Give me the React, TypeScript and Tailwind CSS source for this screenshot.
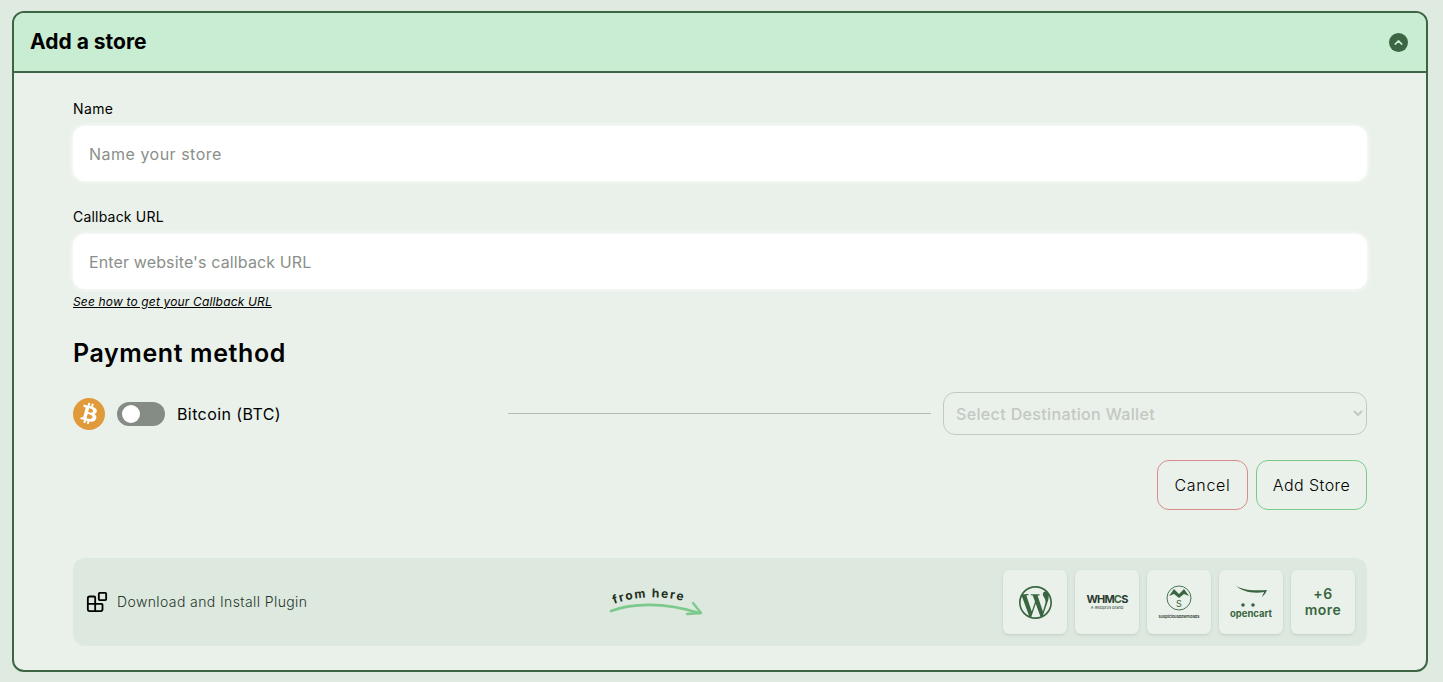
import { Blocks, ChevronUp } from "lucide-react";
import { FaBtc } from "react-icons/fa";
import { SiWordpress } from "react-icons/si";

const font = "font-['Inter','Liberation_Sans',sans-serif]";

function FromHere() {
  return (
    <svg width="100" height="40" viewBox="0 0 100 40" className="overflow-visible">
      <path id="from-here-curve" d="M12 22 C 34 14, 62 12, 92 22" fill="none" />
      <text fontSize="12" fontWeight="700" letterSpacing="1.6" fill="#1f2f22">
        <textPath href="#from-here-curve">from here</textPath>
      </text>
      <path d="M9 29 C 30 21, 62 20, 97 31" fill="none" stroke="#7cc98c" strokeWidth="2.6" strokeLinecap="round" />
      <path d="M91 21 L99 31 L85 32" fill="none" stroke="#7cc98c" strokeWidth="2.4" strokeLinecap="round" strokeLinejoin="round" />
    </svg>
  );
}

function Tile({ children }: { children: React.ReactNode }) {
  return (
    <div className="flex h-16 w-16 flex-col items-center justify-center rounded-md bg-[#e9f1ea] text-[#396640] shadow-[0_1px_3px_rgba(0,0,0,0.12)]">
      {children}
    </div>
  );
}

export default function App() {
  return (
    <div className={`${font} h-[682px] overflow-hidden bg-[#dfeae1] px-3 pt-[11px] text-black`}>
      <div className="h-[661px] w-[1416px] overflow-hidden rounded-xl border-2 border-[#3c6643] bg-[#eaf1ea]">
        <div className="flex h-[60px] items-center justify-between border-b-2 border-[#3c6643] bg-[#c9edd3] pl-4 pr-[18px]">
          <h2 className="text-[21px] font-bold">Add a store</h2>
          <span className="flex h-[19px] w-[19px] items-center justify-center rounded-full bg-[#3c6643] text-[#c9edd3]">
            <ChevronUp size={13} strokeWidth={3} />
          </span>
        </div>

        <div className="px-[59px] pt-[25px]">
          <label className="block text-sm leading-[21px] tracking-[0.4px]">Name</label>
          <input
            placeholder="Name your store"
            className="mt-[7px] block h-[55px] w-full rounded-xl bg-white px-4 text-base tracking-[0.5px] shadow-[0_0_5px_#fff] outline-none placeholder:text-[#8a8f8a]"
          />
          <label className="mt-[25px] block text-sm leading-[21px] tracking-[0.2px]">Callback URL</label>
          <input
            placeholder="Enter website's callback URL"
            className="mt-[7px] block h-[55px] w-full rounded-xl bg-white px-4 text-base tracking-[0.13px] shadow-[0_0_5px_#fff] outline-none placeholder:text-[#8a8f8a]"
          />
          <a className="mt-[4px] block text-xs italic leading-[18px] tracking-[0.16px] underline">See how to get your Callback URL</a>

          <h3 className="mt-[24px] text-[25px] font-semibold leading-9 tracking-[0.6px]">Payment method</h3>

          <div className="mt-[21px] flex items-center">
            <span className="flex h-8 w-8 items-center justify-center rounded-full bg-[#e09a3a] text-white">
              <FaBtc size={21} className="rotate-[14deg]" />
            </span>
            <span className="ml-3 flex h-6 w-12 items-center rounded-full bg-[#858c85] pl-[5px]">
              <span className="h-[18px] w-[18px] rounded-full bg-white" />
            </span>
            <span className="ml-3 w-[331px] text-base tracking-[0.4px]">Bitcoin (BTC)</span>
            <span className="h-px w-[423px] bg-[#b5bcb5]" />
            <select
              disabled
              className="ml-3 h-[43px] flex-1 rounded-xl border border-[#c3c8c3] bg-transparent px-2 text-base font-medium tracking-[0.36px] text-[#c3c8c3] opacity-100"
            >
              <option>Select Destination Wallet</option>
            </select>
          </div>

          <div className="mt-[25px] flex justify-end gap-2">
            <button className="h-[50px] w-[91px] rounded-xl border border-[#d98a8a] text-base font-light tracking-[0.7px]">Cancel</button>
            <button className="h-[50px] w-[111px] rounded-xl border border-[#7cc98c] text-base font-light tracking-[0.45px]">Add Store</button>
          </div>

          <div className="mt-12 flex h-[88px] items-center rounded-xl bg-[#dde9df] pl-[13px] pr-[12px]">
            <Blocks size={22} strokeWidth={2} />
            <span className="ml-[9px] w-[485px] text-sm font-light tracking-[0.4px] text-[#26352a]">Download and Install Plugin</span>
            <FromHere />
            <div className="ml-auto flex gap-2">
              <Tile>
                <SiWordpress size={33} />
              </Tile>
              <Tile>
                <span className="text-[11px] font-bold leading-none tracking-[-0.8px] text-[#2c3a2f]">
                  WHM<span className="text-[#396640]">C</span>S
                </span>
                <span className="text-[4px] leading-[5px] text-[#2c3a2f]">A webpros brand</span>
              </Tile>
              <Tile>
                <svg width="26" height="26" viewBox="0 0 26 26" fill="none" stroke="#396640">
                  <circle cx="13" cy="13" r="12" strokeWidth="0.9" />
                  <path d="M3 11 L8 4 L13 9 L18 4 L23 11 L18 9 L13 13 L8 9 Z" fill="#396640" stroke="none" />
                  <text x="13" y="21.5" fontSize="9" textAnchor="middle" fill="#396640" stroke="none">
                    S
                  </text>
                </svg>
                <span className="mt-[3px] text-[3.9px] font-semibold leading-[6px] text-[#2c3a2f]">suspiciousdownloads</span>
              </Tile>
              <Tile>
                <svg width="34" height="24" viewBox="0 0 34 24" fill="#396640">
                  <path d="M1 1 C 6 5, 14 7, 33 6 C 32 9, 30 11, 28 13 C 29 10, 30 9, 30 8 C 20 10, 8 8, 1 1 Z" />
                  <circle cx="9" cy="21" r="1.8" />
                  <circle cx="19" cy="21" r="1.8" />
                </svg>
                <span className="text-[9.5px] font-bold leading-[12px]">opencart</span>
              </Tile>
              <Tile>
                <span className="text-center text-[14px] font-semibold leading-4 tracking-[0.5px]">
                  +6
                  <br />
                  more
                </span>
              </Tile>
            </div>
          </div>
        </div>
      </div>
    </div>
  );
}
